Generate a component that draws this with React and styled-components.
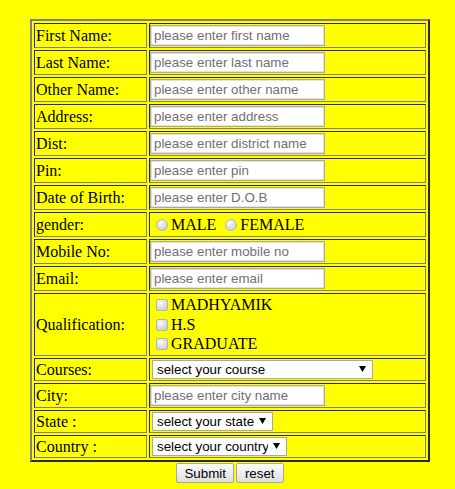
import React from 'react';
import styled, { createGlobalStyle } from 'styled-components';

const GlobalStyle = createGlobalStyle`
	html, body {
		margin: 0;
		background: #ffff00;
	}
	body {
		font-family: "Liberation Serif", "Times New Roman", serif;
		font-size: 16px;
		color: #000;
	}
`;

const textRows = [
	['First Name:', 'please enter first name'],
	['Last Name:', 'please enter last name'],
	['Other Name:', 'please enter other name'],
	['Address:', 'please enter address'],
	['Dist:', 'please enter district name'],
	['Pin:', 'please enter pin'],
	['Date of Birth:', 'please enter D.O.B'],
];

const contactRows = [
	['Mobile No:', 'please enter mobile no'],
	['Email:', 'please enter email'],
];

const Arrow = () => (
	<svg width="7" height="6" viewBox="0 0 7 6">
		<path d="M0 0 H7 L3.5 6 Z" fill="#000" />
	</svg>
);

const Dropdown = ({ width, label }) => (
	<SelectWrap $width={width}>
		<Select defaultValue="">
			<option value="">{label}</option>
		</Select>
		<ArrowBox><Arrow /></ArrowBox>
	</SelectWrap>
);

const Row = ({ label, lines, children }) => (
	<tr>
		<LabelCell>{label}</LabelCell>
		<FieldCell $lines={lines}>{children}</FieldCell>
	</tr>
);

export default function App() {
	return (
		<>
			<GlobalStyle />
			<Page>
				<Form onSubmit={(e) => e.preventDefault()}>
					<Table>
						<tbody>
							{textRows.map(([label, hint]) => (
								<Row key={label} label={label}>
									<TextInput placeholder={hint} />
								</Row>
							))}
							<Row label="gender:" lines={21}>
								<Choice type="radio" name="gender" />MALE{' '}
								<Choice type="radio" name="gender" />FEMALE
							</Row>
							{contactRows.map(([label, hint]) => (
								<Row key={label} label={label}>
									<TextInput placeholder={hint} />
								</Row>
							))}
							<Row label="Qualification:" lines={19.7}>
								<Choice type="checkbox" $box />MADHYAMIK<br />
								<Choice type="checkbox" $box />H.S<br />
								<Choice type="checkbox" $box />GRADUATE
							</Row>
							<Row label="Courses:">
								<Dropdown width={221} label="select your course" />
							</Row>
							<Row label="City:">
								<TextInput placeholder="please enter city name" />
							</Row>
							<Row label="State :">
								<Dropdown width={121} label="select your state" />
							</Row>
							<Row label="Country :">
								<Dropdown width={135} label="select your country" />
							</Row>
						</tbody>
					</Table>
					<Actions>
						<Button type="submit">Submit</Button>
						<Button type="reset" $pad={8}>reset</Button>
					</Actions>
				</Form>
			</Page>
		</>
	);
}

const Page = styled.div`
	padding: 19px 0 6px 30px;
`;

const Form = styled.form`
	display: flex;
	flex-direction: column;
	width: 400px;
	margin: 0;
`;

const Table = styled.table`
	width: 400px;
	border: 2px outset #808080;
	border-collapse: separate;
	border-spacing: 2px;
`;

const Cell = styled.td`
	border: 1px inset #808080;
	padding: 1px;
	vertical-align: middle;
	line-height: 1.15;
`;

const LabelCell = styled(Cell)`
	width: 109px;
	padding-top: 2px;
	padding-bottom: 0;
`;

const FieldCell = styled(Cell)`
	line-height: ${({ $lines }) => ($lines ? `${$lines}px` : '1.15')};
`;

const TextInput = styled.input.attrs({ type: 'text' })`
	display: block;
	box-sizing: border-box;
	width: 175px;
	height: 21px;
	margin: 0 0 0 -1px;
	padding: 1px 3px;
	border: 1px solid #a9a9a9;
	box-shadow: inset 0 0 0 1px #e2e2e2;
	background: #fff;
	font-family: "Liberation Sans", Arial, sans-serif;
	font-size: 13.33px;
	color: #000;
	outline: none;

	&::placeholder {
		color: #707070;
	}
`;

const Choice = styled.input`
	appearance: none;
	width: 12px;
	height: 12px;
	margin: 0 3px 0 5px;
	border: 1px solid #b4b4b4;
	border-radius: ${({ $box }) => ($box ? '2px' : '50%')};
	background: radial-gradient(circle at 35% 30%, #fafafa 0%, #dcdcdc 55%, #c8c8c8 100%);
	vertical-align: -1px;
`;

const SelectWrap = styled.div`
	position: relative;
	width: ${({ $width }) => $width}px;
	height: 19px;
	margin-left: 1px;
`;

const Select = styled.select`
	appearance: none;
	display: block;
	box-sizing: border-box;
	width: 100%;
	height: 19px;
	margin: 0;
	padding: 0 18px 0 4px;
	border: 1px solid #a9a9a9;
	border-radius: 0;
	background: #fff;
	font-family: "Liberation Sans", Arial, sans-serif;
	font-size: 13.33px;
	color: #000;
	outline: none;
`;

const ArrowBox = styled.span`
	position: absolute;
	right: 7px;
	top: 6px;
	display: flex;
	pointer-events: none;
`;

const Actions = styled.div`
	display: flex;
	justify-content: center;
	gap: 2px;
	margin-top: 1px;
`;

const Button = styled.button`
	box-sizing: border-box;
	height: 20px;
	padding: 0 ${({ $pad }) => $pad || 7}px;
	border: 1px solid #a6a6a6;
	border-radius: 2px;
	background: linear-gradient(#fcfcfc, #dedede);
	font-family: "Liberation Sans", Arial, sans-serif;
	font-size: 13.33px;
	color: #000;
`;
